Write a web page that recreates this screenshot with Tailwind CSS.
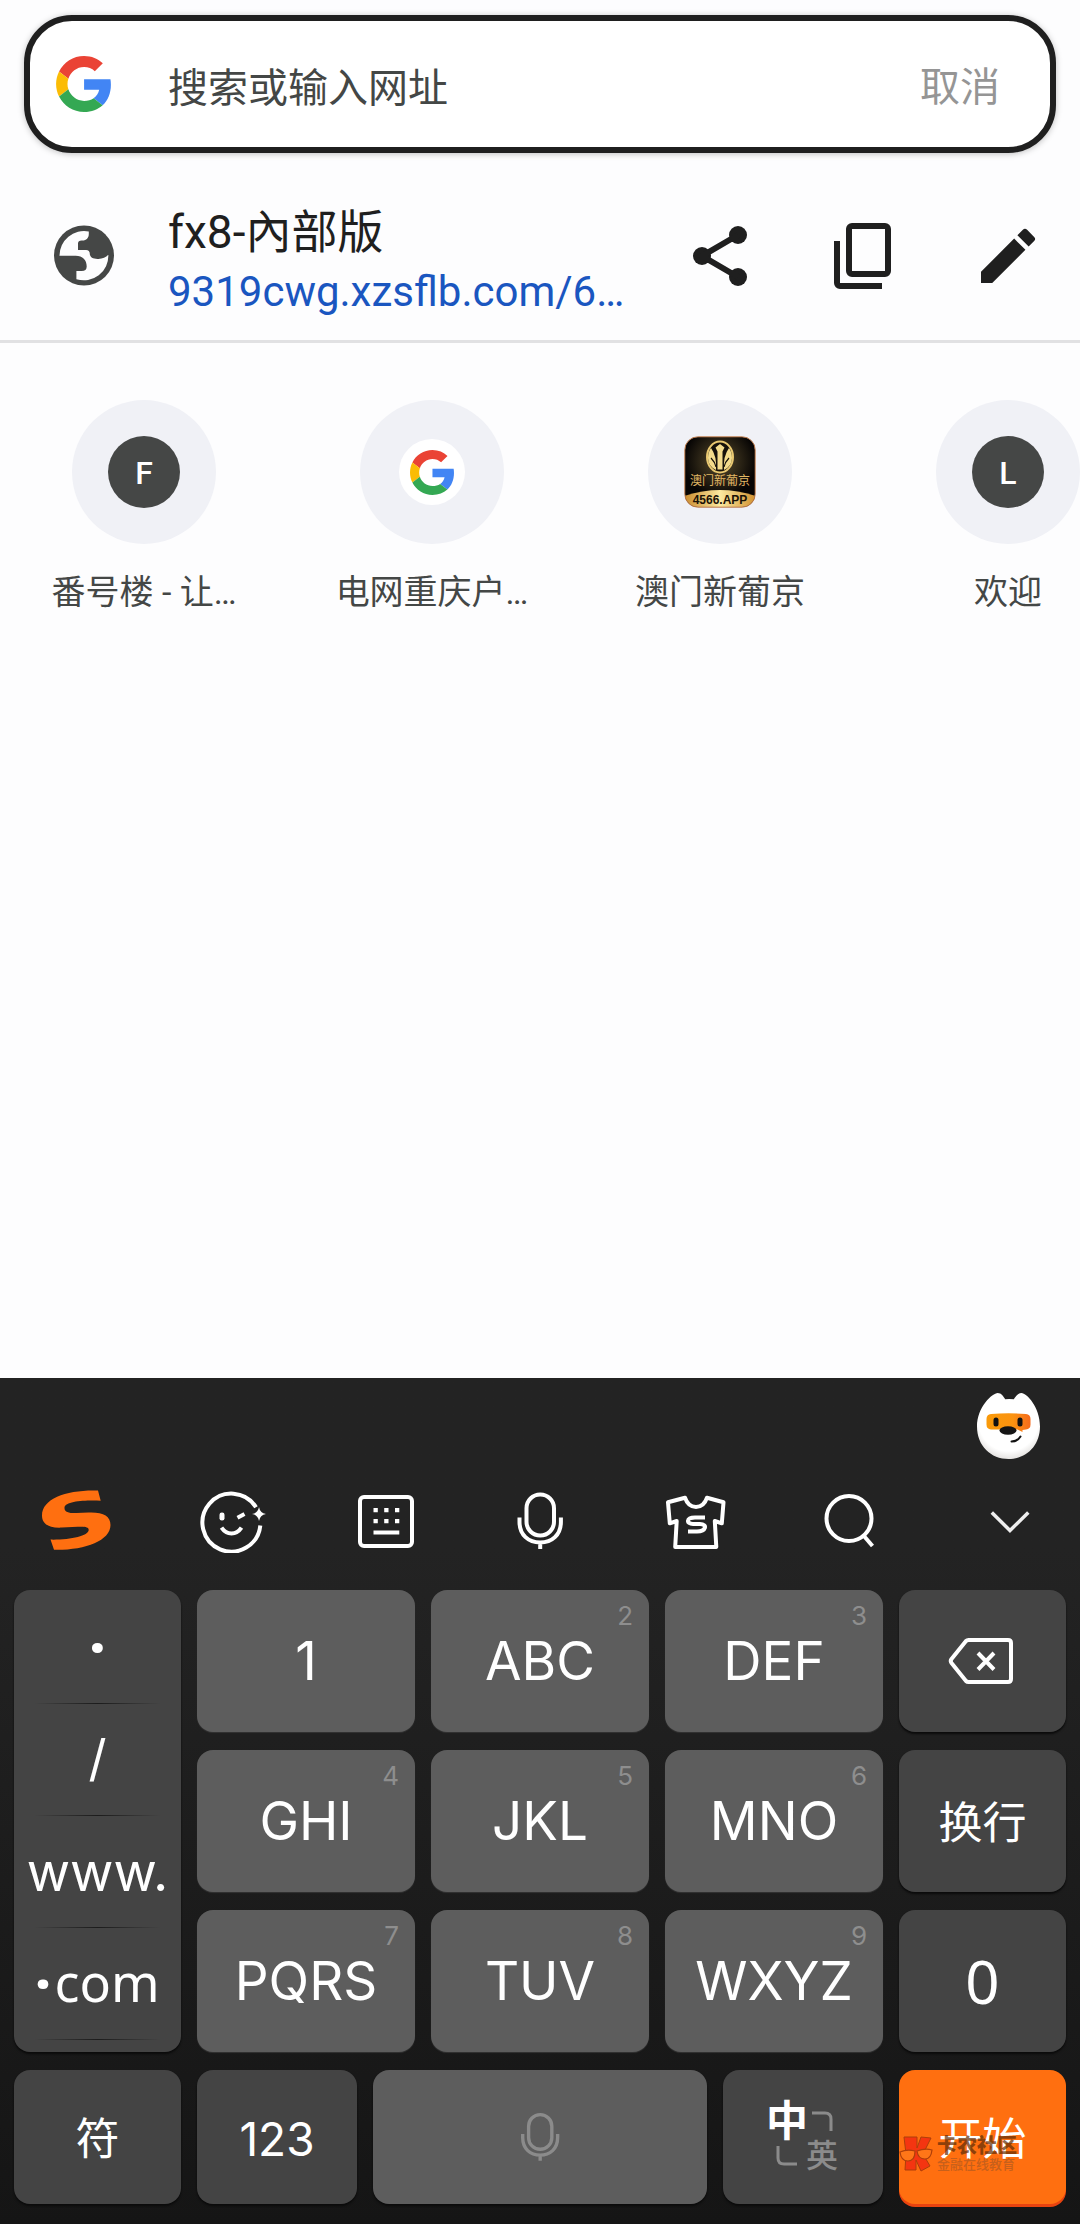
<!DOCTYPE html>
<html lang="zh-CN">
<head>
<meta charset="utf-8">
<meta name="viewport" content="width=device-width, initial-scale=1">
<title>搜索或输入网址</title>
<script src="https://cdn.jsdelivr.net/npm/@tailwindcss/browser@4"></script>
</head>
<body class="flex min-h-screen flex-col overflow-x-hidden bg-[#fdfdfe] font-['Roboto','Noto_Sans_CJK_SC',sans-serif] text-[#1f1f1f]">

<svg class="hidden" aria-hidden="true">
  <symbol id="google" viewBox="0 0 47 48">
    <path fill="#ea4335" d="M24 9.5c3.54 0 6.71 1.22 9.21 3.6l6.85-6.85C35.9 2.38 30.47 0 24 0 14.62 0 6.51 5.38 2.56 13.22l7.98 6.19C12.43 13.72 17.74 9.5 24 9.5z"/>
    <path fill="#4285f4" d="M46.98 24.55c0-1.57-.15-3.09-.38-4.55H24v9.02h12.94c-.58 2.96-2.26 5.48-4.78 7.18l7.73 6c4.51-4.18 7.09-10.36 7.09-17.65z"/>
    <path fill="#fbbc05" d="M10.53 28.59c-.48-1.45-.76-2.99-.76-4.59s.27-3.14.76-4.59l-7.98-6.19C.92 16.46 0 20.12 0 24c0 3.88.92 7.54 2.56 10.78l7.97-6.19z"/>
    <path fill="#34a853" d="M24 48c6.48 0 11.93-2.13 15.89-5.81l-7.73-6c-2.15 1.45-4.92 2.3-8.16 2.3-6.26 0-11.57-4.22-13.47-9.91l-7.98 6.19C6.51 42.62 14.62 48 24 48z"/>
  </symbol>
  <symbol id="mic" viewBox="0 0 72 64">
    <g fill="none" stroke="currentColor" stroke-width="4">
      <rect x="22.5" y="5.5" width="27.500" height="41" rx="13.700"/>
      <path d="M15.500 28.500v4.500c0 13 9 20.500 20.700 20.500s20.700-7.500 20.700-20.500v-4.500M36.200 53.500v6.500"/>
    </g>
  </symbol>
</svg>

<header class="px-6 pt-[15px]">
  <form class="flex h-[138px] items-center rounded-[48px] border-6 border-[#1f1f1f] bg-white pr-[50px] pl-[26px] shadow-[0_1px_6px_rgba(0,0,0,0.25)]">
    <svg class="h-14 w-[55px] shrink-0" aria-hidden="true"><use href="#google"/></svg>
    <input type="text" aria-label="搜索或输入网址" placeholder="搜索或输入网址" class="ml-[57px] h-16 min-w-0 flex-1 bg-transparent pt-2 text-[40px] text-[#444746] outline-none placeholder:text-[#444746]">
    <button type="button" class="pt-2 text-[40px] leading-14 text-[#959595]">取消</button>
  </form>
</header>

<main class="flex-1">
  <section class="mt-[18px] flex h-[172px] items-center border-b-3 border-[#e1e1e3]">
    <svg class="ml-[54px] h-[61px] w-[60px] shrink-0" viewBox="0 0 60 61" aria-hidden="true">
      <circle cx="30" cy="30.500" r="30" fill="#454746"/>
      <path fill="#fdfdfe" d="M34.800 6.500v2.500c0 4-2.500 6.500-6.300 6.500h-1c-2.200 0-3.500 1-3.500 3v6.500h8c2.500 0 3.800 1.500 3.800 3.700 0 3.600 3.500 5.500 8.700 5.200 4-.2 7.500-1.500 9.800-4.200a24.500 24.500 0 0 1-31.900 24.500V46h5.300c3.300 0 5-1.500 5-4.500 0-6.500-4-10.800-11-10.800H5.500A24.500 24.500 0 0 1 34.800 6.500z"/>
    </svg>
    <div class="ml-[54px] min-w-0 flex-1 pt-3">
      <h1 class="truncate text-[46px] leading-[60px] font-normal">fx8-內部版</h1>
      <a href="#" class="block truncate text-[42px] leading-[60px] text-[#1a56c0]">9319cwg.xzsflb.com/6…</a>
    </div>
    <div class="flex shrink-0">
      <button type="button" aria-label="分享" class="flex w-36 justify-center">
        <svg class="size-[72px]" viewBox="0 0 24 24" fill="currentColor"><circle cx="18" cy="5" r="3"/><circle cx="6" cy="12" r="3"/><circle cx="18" cy="19" r="3"/><path fill="none" stroke="currentColor" stroke-width="2" d="M18 5 6 12l12 7"/></svg>
      </button>
      <button type="button" aria-label="复制" class="flex w-36 justify-center">
        <svg class="size-[72px]" viewBox="0 0 24 24" fill="currentColor"><path d="M8 1h11a2 2 0 0 1 2 2v14a2 2 0 0 1-2 2H8a2 2 0 0 1-2-2V3a2 2 0 0 1 2-2zm0 2v14h11V3zM2 7h2v14h14v2H4a2 2 0 0 1-2-2z"/></svg>
      </button>
      <button type="button" aria-label="编辑" class="flex w-36 justify-center">
        <svg class="size-[72px]" viewBox="0 0 24 24" fill="currentColor"><path d="M3 17.250V21h3.750L17.810 9.940l-3.750-3.750L3 17.250zM20.710 7.040a1 1 0 0 0 0-1.410l-2.340-2.340a1 1 0 0 0-1.410 0l-1.830 1.830 3.750 3.750 1.830-1.830z"/></svg>
      </button>
    </div>
  </section>

  <nav class="flex overflow-hidden pt-[57px] text-[34px] leading-12 text-[#444746]">
    <a href="#" class="flex w-72 shrink-0 flex-col items-center gap-6">
      <span class="flex size-36 items-center justify-center rounded-full bg-[#f0f1f6]"><span class="flex size-[72px] items-center justify-center rounded-full bg-[#454746] pt-0.5 text-[32px] font-medium text-white">F</span></span>
      <span>番号楼 - 让…</span>
    </a>
    <a href="#" class="flex w-72 shrink-0 flex-col items-center gap-6">
      <span class="flex size-36 items-center justify-center rounded-full bg-[#f0f1f6]"><span class="flex size-[66px] items-center justify-center rounded-full bg-white"><svg class="h-[45px] w-11" aria-hidden="true"><use href="#google"/></svg></span></span>
      <span>电网重庆户…</span>
    </a>
    <a href="#" class="flex w-72 shrink-0 flex-col items-center gap-6">
      <span class="flex size-36 items-center justify-center rounded-full bg-[#f0f1f6]">
        <svg class="size-[72px]" viewBox="0 0 72 72" aria-hidden="true">
          <defs>
            <linearGradient id="gold" x1="0" x2="1" y1="0" y2="0"><stop offset="0" stop-color="#c98a2c"/><stop offset=".5" stop-color="#fbe9a0"/><stop offset="1" stop-color="#d1902e"/></linearGradient>
            <radialGradient id="glow" cx=".5" cy=".35" r=".5"><stop offset="0" stop-color="#5a4c2c"/><stop offset="1" stop-color="#070504"/></radialGradient>
            <clipPath id="tile"><rect x="1" y="1" width="70" height="70" rx="13"/></clipPath>
          </defs>
          <g clip-path="url(#tile)">
            <rect width="72" height="72" fill="url(#glow)"/>
            <path fill="url(#gold)" d="M0 60Q36 48 72 60V72H0z"/>
          </g>
          <rect x=".8" y=".8" width="70.400" height="70.400" rx="13" fill="none" stroke="#b87545" stroke-width="1"/>
          <ellipse cx="36" cy="21" rx="13" ry="15.500" fill="#17120a" stroke="#e9c870" stroke-width="2"/>
          <path fill="#f4dc8c" d="M36 8l4.500 3.500-2 4v18h-5v-18l-2-4zM27 12q6 8 5 22-8-4-8-12 0-6 3-10zM45 12q-6 8-5 22 8-4 8-12 0-6-3-10z"/>
          <path fill="none" stroke="#17120a" stroke-width="1.200" d="M27 22q4 4 5 9M45 22q-4 4-5 9"/>
          <text x="36" y="49" text-anchor="middle" font-size="12" font-family="'Noto Sans CJK SC',sans-serif" fill="#e2b765">澳门新葡京</text>
          <text x="36" y="68" text-anchor="middle" font-size="12" font-weight="700" font-family="'Liberation Sans',sans-serif" fill="#1a1206">4566.APP</text>
        </svg>
      </span>
      <span>澳门新葡京</span>
    </a>
    <a href="#" class="flex w-72 shrink-0 flex-col items-center gap-6">
      <span class="flex size-36 items-center justify-center rounded-full bg-[#f0f1f6]"><span class="flex size-[72px] items-center justify-center rounded-full bg-[#454746] pt-0.5 text-[32px] font-medium text-white">L</span></span>
      <span>欢迎</span>
    </a>
  </nav>
</main>

<section aria-label="键盘" class="bg-linear-to-b from-[#232323] from-20% to-[#151515] pb-4 font-['Inter','Noto_Sans_CJK_SC',sans-serif] text-white">
  <div class="flex h-[100px] items-start justify-end pt-[15px] pr-10">
    <button type="button" aria-label="汪仔">
      <svg class="h-[66px] w-[63px]" viewBox="0 0 63 66">
        <defs>
          <linearGradient id="mask" x1="0" x2="1" y1="0" y2="0"><stop offset="0" stop-color="#f99a0a"/><stop offset=".6" stop-color="#fb9310"/><stop offset="1" stop-color="#f56a1c"/></linearGradient>
          <radialGradient id="fur" cx=".5" cy=".4" r=".6"><stop offset=".8" stop-color="#fff"/><stop offset="1" stop-color="#e6e4e2"/></radialGradient>
        </defs>
        <path fill="url(#fur)" d="M20.700 0c3.500 0 5.500 3 7.500 6.200q3.500-.6 8.600 0C39 3 41 0 44.500 0c5 0 18.500 14 18.500 33.500C63 53 49 66 31.500 66S0 53 0 33.500C0 14 15.500 0 20.700 0z"/>
        <path fill="url(#mask)" d="M14 21q17.500-1.500 35 0 4.500.5 4.500 5v5.500q0 4.500-4.500 5l-3.500.5v2l-5-2.500H14q-4.500-.5-4.500-5V26q0-4.500 4.500-5z"/>
        <rect x="16.500" y="24.500" width="5" height="9" rx="2.500" fill="#111"/><rect x="40.500" y="24.500" width="5" height="9" rx="2.500" fill="#111"/>
        <ellipse cx="31" cy="37.500" rx="8.500" ry="4.200" fill="#151515"/>
        <path fill="none" stroke="#111" stroke-width="2" stroke-linecap="round" d="M34.500 48.500q6 0 9-5"/>
      </svg>
    </button>
  </div>

  <div class="grid h-[86px] grid-cols-7 place-items-center">
    <button type="button" aria-label="搜狗"><svg class="h-16 w-[72px]" viewBox="0 0 72 64" fill="#ff6f10"><path d="M57 1.500l2.700 10.200C45 11 24 12 23.500 18.500c-.3 4.800 5 5.700 12 5.500l12-.4C62 23 69.500 27 69.500 36 69.500 52 43 61.500 13 60.800L9.500 50.600C29 51 47.500 47 47.700 41c.1-3.500-5-3.500-11-3.200l-16 .8C7 39.200 1 34.500 1 26.500 1 9 27 .5 57 1.500z"/></svg></button>
    <button type="button" aria-label="表情"><svg class="h-16 w-[72px]" viewBox="0 0 72 64" fill="none" stroke="currentColor" stroke-width="4"><path d="M61 18.200A29 29 0 1 0 65.300 36.500"/><path stroke="none" fill="currentColor" d="M64 18q1 6 7 7-6 1-7 7-1-6-7-7 6-1 7-7z"/><rect x="24.500" y="23.500" width="5" height="8" rx="2.300" fill="currentColor" stroke="none"/><path d="M42.500 28.700l7-3.700M26.500 38.700q4 5.800 10 5.800t10-5.800"/></svg></button>
    <button type="button" aria-label="键盘切换"><svg class="h-16 w-[72px]" viewBox="0 0 72 64" fill="currentColor"><rect x="10" y="8" width="52" height="49" rx="4" fill="none" stroke="currentColor" stroke-width="4"/><path d="M23.500 19h4.300v4.300h-4.300zM34.200 19h4.300v4.300h-4.300zM45 19h4.300v4.300H45zM23.500 30h4.300v4.300h-4.300zM34.200 30h4.300v4.300h-4.300zM45 30h4.300v4.300H45zM23.500 41.500h25.800v4H23.500z"/></svg></button>
    <button type="button" aria-label="语音"><svg class="h-16 w-[72px]"><use href="#mic"/></svg></button>
    <button type="button" aria-label="皮肤"><svg class="h-16 w-[72px]" viewBox="0 0 72 64" fill="none" stroke="currentColor" stroke-width="4" stroke-linejoin="round"><path d="M10 13.300l17-4.600c2 6 6 9.300 11 9.300s9-3.300 11-9.300l16.500 4.600-1.700 21-7-2.300 1.500 26H17.200l1.500-26-6.900 2.300z"/><path d="M47 28.500H37c-9 0-9 6.500-2 6.500h7c8 0 6 7.500-3 7.500h-9"/></svg></button>
    <button type="button" aria-label="搜索"><svg class="h-16 w-[72px]" viewBox="0 0 72 64" fill="none" stroke="currentColor" stroke-width="4"><circle cx="36" cy="29.500" r="22.500"/><path d="M50.500 46.500l9 10.500"/></svg></button>
    <button type="button" aria-label="收起"><svg class="h-16 w-[72px]" viewBox="0 0 72 64" fill="none" stroke="#eee" stroke-width="3.500"><path d="M24.800 23.500L43 41.500l18.300-18"/></svg></button>
  </div>

  <div class="grid grid-cols-[167fr_218fr_218fr_218fr_167fr] grid-rows-[142px_142px_142px] gap-x-4 gap-y-[18px] px-[14px] pt-[26px] text-[53px] leading-[60px]">
    <div class="row-span-3 flex flex-col rounded-2xl bg-[#444] shadow-[0_2px_2px_#0b0b0b]">
      <button type="button" class="h-[113px] font-['Noto_Sans'] font-black">·</button>
      <hr class="mx-5 h-px border-0 bg-linear-to-r from-transparent via-[#1c1c1c] to-transparent">
      <button type="button" class="h-[111px] pb-1 text-[50px]">/</button>
      <hr class="mx-5 h-px border-0 bg-linear-to-r from-transparent via-[#1c1c1c] to-transparent">
      <button type="button" class="h-[111px]">www.</button>
      <hr class="mx-5 h-px border-0 bg-linear-to-r from-transparent via-[#1c1c1c] to-transparent">
      <button type="button" class="h-[111px] pb-1 font-['Noto_Sans'] text-[52px]"><b class="font-black">·</b><span class="ml-1">com</span></button>
      <hr class="mx-5 h-px border-0 bg-linear-to-r from-transparent via-[#1c1c1c] to-transparent">
    </div>
    <button type="button" class="rounded-2xl bg-[#5d5d5d] shadow-[0_1px_1px_#333]">1</button>
    <button type="button" class="relative rounded-2xl bg-[#5d5d5d] shadow-[0_1px_1px_#333]">ABC<span class="absolute top-2 right-4 text-[26px] leading-9 text-[#8e8e8e]">2</span></button>
    <button type="button" class="relative rounded-2xl bg-[#5d5d5d] shadow-[0_1px_1px_#333]">DEF<span class="absolute top-2 right-4 text-[26px] leading-9 text-[#8e8e8e]">3</span></button>
    <button type="button" aria-label="删除" class="flex items-center justify-center rounded-2xl bg-[#444] shadow-[0_2px_2px_#0b0b0b]">
      <svg class="h-12 w-[66px]" viewBox="2 0 66 48" fill="none" stroke="currentColor" stroke-width="4" stroke-linejoin="round" overflow="visible"><path d="M20.500 3H60q3 0 3 3v36q0 3-3 3H20.500q-1.500 0-2.500-1L3.500 26q-1.500-2 0-4L18 4q1-1 2.500-1z"/><path d="M30 16l16 16.500M46 16L30 32.500"/></svg>
    </button>
    <button type="button" class="relative rounded-2xl bg-[#5d5d5d] shadow-[0_1px_1px_#333]">GHI<span class="absolute top-2 right-4 text-[26px] leading-9 text-[#8e8e8e]">4</span></button>
    <button type="button" class="relative rounded-2xl bg-[#5d5d5d] shadow-[0_1px_1px_#333]">JKL<span class="absolute top-2 right-4 text-[26px] leading-9 text-[#8e8e8e]">5</span></button>
    <button type="button" class="relative rounded-2xl bg-[#5d5d5d] shadow-[0_1px_1px_#333]">MNO<span class="absolute top-2 right-4 text-[26px] leading-9 text-[#8e8e8e]">6</span></button>
    <button type="button" class="rounded-2xl bg-[#444] pt-1 text-[44px] shadow-[0_2px_2px_#0b0b0b]">换行</button>
    <button type="button" class="relative rounded-2xl bg-[#5d5d5d] shadow-[0_1px_1px_#333]">PQRS<span class="absolute top-2 right-4 text-[26px] leading-9 text-[#8e8e8e]">7</span></button>
    <button type="button" class="relative rounded-2xl bg-[#5d5d5d] shadow-[0_1px_1px_#333]">TUV<span class="absolute top-2 right-4 text-[26px] leading-9 text-[#8e8e8e]">8</span></button>
    <button type="button" class="relative rounded-2xl bg-[#5d5d5d] shadow-[0_1px_1px_#333]">WXYZ<span class="absolute top-2 right-4 text-[26px] leading-9 text-[#8e8e8e]">9</span></button>
    <button type="button" class="rounded-2xl bg-[#444] font-['Noto_Sans'] text-[60px] shadow-[0_2px_2px_#0b0b0b]">0</button>
  </div>

  <div class="mt-[18px] grid h-[138px] grid-cols-[167fr_160fr_334fr_160fr_167fr] gap-4 px-[14px] pb-1 text-[44px] leading-[60px]">
    <button type="button" class="rounded-2xl bg-[#444] pt-1 shadow-[0_2px_2px_#0b0b0b]">符</button>
    <button type="button" class="rounded-2xl bg-[#444] pt-1 text-[46px] shadow-[0_2px_2px_#0b0b0b]">123</button>
    <button type="button" aria-label="空格" class="flex items-center justify-center rounded-2xl bg-[#5d5d5d] shadow-[0_2px_2px_#0b0b0b]"><svg class="h-[54px] w-[62px] text-[#8b8b8b]"><use href="#mic"/></svg></button>
    <button type="button" aria-label="中英切换" class="flex items-center justify-center rounded-2xl bg-[#444] shadow-[0_2px_2px_#0b0b0b]">
      <span class="grid grid-cols-[38px_32px] grid-rows-[38px_32px] place-items-center">
        <span class="text-[42px] leading-10 font-bold">中</span>
        <svg class="size-6" viewBox="0 0 24 24" fill="none" stroke="#8b8b8b" stroke-width="3"><path d="M2 4h13q6 0 6 6v12"/></svg>
        <svg class="size-6" viewBox="0 0 24 24" fill="none" stroke="#8b8b8b" stroke-width="3"><path d="M3 2v12q0 6 6 6h13"/></svg>
        <span class="text-[32px] leading-8 font-medium text-[#8b8b8b]">英</span>
      </span>
    </button>
    <button type="button" class="relative rounded-2xl bg-[#ff6f10] pt-1 shadow-[0_3px_0_#e8430f]">开始
      <span class="absolute top-[66px] left-0 flex items-center gap-1 opacity-70">
        <svg class="h-9 w-[34px]" viewBox="0 0 34 36" aria-hidden="true"><path fill="#f01d12" stroke="#8c2a08" stroke-width="1" d="M5 1h13v11l4-11 10 1-8 16 7 12-9 5-5-11v10H6l1-16z"/><path fill="#ff7a1c" stroke="#8c2a08" stroke-width="1.200" d="M1 16q7-3 15-1 0 10-7 10t-8-9zM18 15q8-3 15-1-1 9-7 9-7 0-8-8z"/></svg>
        <span class="flex flex-col items-start text-[#5e2c08]">
          <span class="text-[20px] leading-5 font-black">卡农社区</span>
          <span class="text-[13px] leading-4 font-medium text-[#b05a20]">金融在线教育</span>
        </span>
      </span>
    </button>
  </div>
</section>
</body>
</html>
